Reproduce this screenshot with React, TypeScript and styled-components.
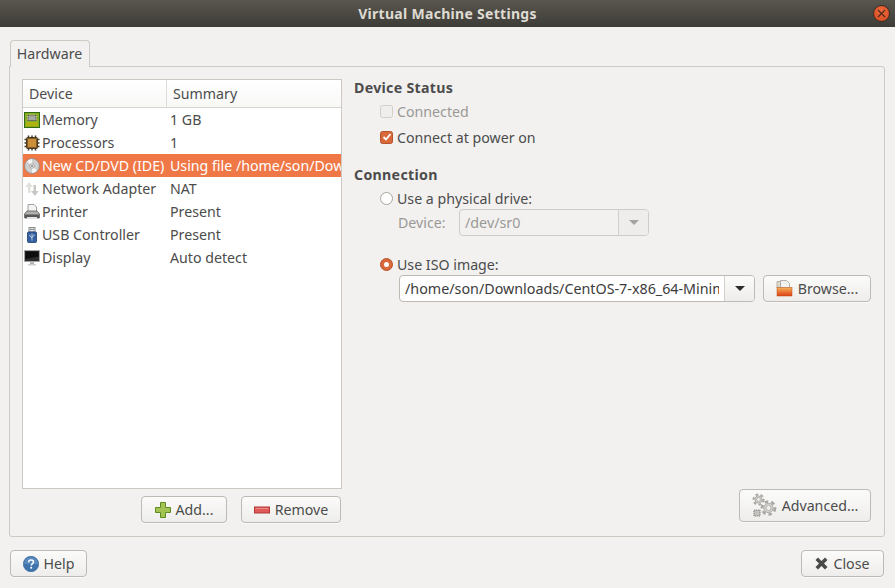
import React from 'react';
import styled, { createGlobalStyle } from 'styled-components';

const GlobalStyle = createGlobalStyle`
  html, body { margin: 0; padding: 0; }
  body {
    width: 895px;
    height: 588px;
    overflow: hidden;
    background: #f2f1f0;
    font-family: "Noto Sans", "Open Sans", sans-serif;
    font-size: 14.2px;
    color: #4c4c4c;
  }
`;

const Window = styled.div`
  width: 895px;
  height: 588px;
  display: flex;
  flex-direction: column;
`;

const TitleBar = styled.div`
  height: 27px;
  flex: none;
  display: grid;
  grid-template-columns: 1fr auto 1fr;
  align-items: center;
  background: linear-gradient(#59564e, #3d3c37);
  color: #dfdbd2;
  font-weight: 700;
  font-size: 14px;
  letter-spacing: 0.3px;
`;

const Title = styled.div`
  grid-column: 2;
`;

const WindowClose = styled.div`
  grid-column: 3;
  justify-self: end;
  margin-right: 5px;
  width: 15px;
  height: 15px;
  border-radius: 50%;
  background: radial-gradient(circle at 50% 35%, #f0693c, #d4481f);
  border: 0.5px solid #3a2c22;
  display: flex;
  align-items: center;
  justify-content: center;
`;

const Content = styled.div`
  flex: 1;
  display: flex;
  flex-direction: column;
  padding: 13px 10px 11px 9px;
  min-height: 0;
`;

const TabStrip = styled.div`
  display: flex;
  height: 26px;
  flex: none;
`;

const Tab = styled.div`
  margin-left: 0.5px;
  width: 80px;
  box-sizing: border-box;
  border: 1px solid #cdc9c3;
  border-bottom: 0;
  border-radius: 4px 4px 0 0;
  background: #f2f1f0;
  text-align: center;
  line-height: 25px;
  margin-bottom: -1px;
  position: relative;
  z-index: 1;
`;

const Notebook = styled.div`
  flex: 1;
  min-height: 0;
  box-sizing: border-box;
  border: 1px solid #cdc9c3;
  border-radius: 0 3px 3px 3px;
  display: flex;
  gap: 12px;
  padding: 12px 13px 13px 12px;
`;

const LeftColumn = styled.div`
  width: 320px;
  flex: none;
  display: flex;
  flex-direction: column;
`;

const DeviceTable = styled.div`
  flex: 1;
  box-sizing: border-box;
  background: #fff;
  border: 1px solid #cdc9c3;
  overflow: hidden;
`;

const HeaderRow = styled.div`
  height: 28px;
  box-sizing: border-box;
  display: grid;
  grid-template-columns: 143px 1fr;
  border-bottom: 1px solid #d8d5d1;
  background: linear-gradient(#fff, #f8f8f7);
`;

const HeaderCell = styled.div<{ $divider?: boolean }>`
  padding-left: 6px;
  line-height: 27px;
  border-left: ${(p) => (p.$divider ? '1px solid #dedbd8' : '0')};
`;

const Row = styled.div<{ $selected?: boolean }>`
  height: 23px;
  display: grid;
  grid-template-columns: 147px 1fr;
  align-items: center;
  white-space: nowrap;
  overflow: hidden;
  background: ${(p) => (p.$selected ? '#f07746' : 'transparent')};
  color: ${(p) => (p.$selected ? '#fff' : '#4c4c4c')};
`;

const NameCell = styled.div`
  display: flex;
  align-items: center;
  gap: 2px;
  padding-left: 1px;
`;

const SummaryCell = styled.div`
  min-width: 0;
  overflow: hidden;
`;

const ButtonRow = styled.div`
  display: flex;
  justify-content: flex-end;
  gap: 14px;
  padding-right: 1px;
  margin-top: 7px;
`;

const Button = styled.div<{ $w: number; $h?: number }>`
  width: ${(p) => p.$w}px;
  height: ${(p) => p.$h ?? 27}px;
  flex: none;
  box-sizing: border-box;
  border: 1px solid #bdb9b3;
  border-radius: 4px;
  background: linear-gradient(#fbfbfa, #eeedeb);
  box-shadow: 0 1px 0 rgba(255, 255, 255, 0.6);
  display: flex;
  align-items: center;
  justify-content: center;
  gap: 5px;
`;

const RightColumn = styled.div`
  flex: 1;
  min-width: 0;
  display: flex;
  flex-direction: column;
`;

const Heading = styled.div<{ $top: number }>`
  font-weight: 700;
  line-height: 18px;
  letter-spacing: 0.3px;
  margin-top: ${(p) => p.$top}px;
  color: #4c4c4c;
`;

const OptionRow = styled.div<{ $top: number; $disabled?: boolean }>`
  display: flex;
  align-items: center;
  gap: 4px;
  height: 18px;
  margin-top: ${(p) => p.$top}px;
  padding-left: 26px;
  color: ${(p) => (p.$disabled ? '#9a9995' : '#4c4c4c')};
`;

const CheckBox = styled.div<{ $checked?: boolean; $disabled?: boolean }>`
  width: 13px;
  height: 13px;
  box-sizing: border-box;
  border-radius: 2.5px;
  border: 1px solid ${(p) => (p.$checked ? '#b5542c' : p.$disabled ? '#d2cfca' : '#aaa')};
  background: ${(p) => (p.$checked ? '#d9683b' : p.$disabled ? '#efeeec' : '#fff')};
  display: flex;
  align-items: center;
  justify-content: center;
`;

const Radio = styled.div<{ $checked?: boolean }>`
  width: 13px;
  height: 13px;
  box-sizing: border-box;
  border-radius: 50%;
  border: 1px solid ${(p) => (p.$checked ? '#b5542c' : '#a8a5a0')};
  background: ${(p) => (p.$checked ? '#d9683b' : '#fff')};
  display: flex;
  align-items: center;
  justify-content: center;
  &::after {
    content: '';
    display: ${(p) => (p.$checked ? 'block' : 'none')};
    width: 5px;
    height: 5px;
    border-radius: 50%;
    background: #fff;
  }
`;

const DeviceLine = styled.div`
  display: flex;
  align-items: center;
  margin-top: 2px;
  padding-left: 44px;
  color: #9a9995;
`;

const DeviceLabel = styled.div`
  width: 61px;
`;

const ComboBox = styled.div<{ $w: number; $disabled?: boolean }>`
  width: ${(p) => p.$w}px;
  height: 27px;
  flex: none;
  box-sizing: border-box;
  display: flex;
  border: 1px solid ${(p) => (p.$disabled ? '#cfccc7' : '#bdb9b3')};
  border-radius: 4px;
  overflow: hidden;
  background: ${(p) => (p.$disabled ? '#f2f1f0' : '#fff')};
`;

const ComboText = styled.div<{ $disabled?: boolean }>`
  flex: 1;
  min-width: 0;
  margin: 0 5px;
  font-size: 14.3px;
  white-space: nowrap;
  overflow: hidden;
  line-height: 25px;
  color: ${(p) => (p.$disabled ? '#9a9995' : '#3c3c3c')};
`;

const ComboArrow = styled.div<{ $disabled?: boolean }>`
  width: 29px;
  flex: none;
  display: flex;
  align-items: center;
  justify-content: center;
  border-left: 1px solid #d3d0cb;
  background: ${(p) => (p.$disabled ? '#eeedeb' : 'linear-gradient(#fbfbfa, #eeedeb)')};
  &::after {
    content: '';
    border-left: 5px solid transparent;
    border-right: 5px solid transparent;
    border-top: 5px solid ${(p) => (p.$disabled ? '#a5a3a0' : '#2c2c2c')};
  }
`;

const IsoLine = styled.div`
  display: flex;
  align-items: center;
  gap: 8px;
  margin-top: 2px;
  padding-left: 45px;
`;

const Spacer = styled.div`
  flex: 1;
`;

const AdvancedRow = styled.div`
  display: flex;
  justify-content: flex-end;
  margin-bottom: 1px;
`;

const Footer = styled.div`
  display: flex;
  justify-content: space-between;
  flex: none;
  margin-top: 13px;
  padding: 0 1px;
`;

const Icon = styled.svg`
  flex: none;
  display: block;
`;

const MemoryIcon = () => (
  <Icon width="16" height="16" viewBox="0 0 16 16">
    <rect x="0.5" y="0.5" width="15" height="15" fill="#8aac26" stroke="#2f6b12" />
    <path d="M2 10h12v4.500H2z" fill="#d9d90f" />
    <path d="M3 10v5M5 10v5M7 10v5M9 10v5M11 10v5M13 10v5" stroke="#6a7a10" strokeWidth="0.8" />
    <rect x="4" y="3.500" width="8" height="5" fill="#a9a9a4" stroke="#555" strokeWidth="0.7" />
    <path d="M3 4.500h1M3 7h1M12 4.500h1M12 7h1M6 2.500v1M8 2.500v1M10 2.500v1" stroke="#e4e4e0" strokeWidth="0.8" />
  </Icon>
);

const CpuIcon = () => (
  <Icon width="16" height="16" viewBox="0 0 16 16">
    <path d="M4.500 0.500v15M8 0.500v15M11.500 0.500v15M0.500 4.500h15M0.500 8h15M0.500 11.500h15" stroke="#3f3a32" strokeWidth="1.500" />
    <rect x="2.500" y="2.500" width="11" height="11" rx="1" fill="#7a5a2a" stroke="#4d3a1d" />
    <rect x="4" y="4" width="8" height="8" fill="#cc8e36" />
  </Icon>
);

const DiscIcon = () => (
  <Icon width="16" height="16" viewBox="0 0 16 16">
    <circle cx="8" cy="8" r="7.400" fill="#cfcfcf" stroke="#8d8d8d" strokeWidth="0.8" />
    <path d="M8 8L3 3.500A7 7 0 0 1 8 1zM8 8l5 4.500A7 7 0 0 1 8 15z" fill="#f4f4f4" />
    <circle cx="8" cy="8" r="2.200" fill="#fff" stroke="#8d8d8d" strokeWidth="0.8" />
    <circle cx="8" cy="8" r="0.900" fill="#777" />
  </Icon>
);

const NetworkIcon = () => (
  <Icon width="16" height="16" viewBox="0 0 16 16">
    <path d="M5 1L1.500 6H4v6h2.500V6H9z" fill="#e0dfdb" />
    <path d="M11 15l3.500-5H12V4H9.500v6H7z" fill="#c8c7c3" />
  </Icon>
);

const PrinterIcon = () => (
  <Icon width="16" height="16" viewBox="0 0 16 16">
    <path d="M4 0.500h6l2.500 2.500v5H4z" fill="#f4f4f2" stroke="#8a8a86" strokeWidth="0.8" />
    <path d="M3 7h10l2.500 3v4H0.500v-4z" fill="#b0b0ad" stroke="#5e5e5b" strokeWidth="0.8" />
    <rect x="1" y="10.500" width="14" height="3.500" fill="#55555a" />
    <rect x="3" y="13" width="10" height="2" fill="#e2e2e2" />
  </Icon>
);

const UsbIcon = () => (
  <Icon width="16" height="16" viewBox="0 0 16 16">
    <rect x="5" y="0.500" width="6" height="4.500" fill="#e4e4e2" stroke="#77777a" strokeWidth="0.8" />
    <rect x="6.300" y="1.800" width="1.200" height="1.200" fill="#555" />
    <rect x="8.600" y="1.800" width="1.200" height="1.200" fill="#555" />
    <rect x="3.500" y="5" width="9" height="10.500" rx="1" fill="#34609f" stroke="#1f3c6c" strokeWidth="0.8" />
    <path d="M8 6.500v7M8 11L5.800 9V7.800M8 10l2.200-1.600V7.500" stroke="#dbe5f2" strokeWidth="0.8" fill="none" />
  </Icon>
);

const DisplayIcon = () => (
  <Icon width="16" height="16" viewBox="0 0 16 16">
    <rect x="0.500" y="0.500" width="15" height="11" fill="#2d2d2d" stroke="#a8a8a8" strokeWidth="0.800" />
    <path d="M1.500 1.500h13v5L1.500 9z" fill="#0e0e0e" />
    <rect x="6" y="11.500" width="4" height="2.500" fill="#b5b5b5" />
    <rect x="4" y="14" width="8" height="1.500" fill="#cfcfcf" />
  </Icon>
);

const PlusIcon = () => (
  <Icon width="16" height="16" viewBox="0 0 16 16">
    <path d="M5.500 0.500h5v5h5v5h-5v5h-5v-5h-5v-5h5z" fill="#a3c453" stroke="#5f8a22" />
  </Icon>
);

const MinusIcon = () => (
  <Icon width="16" height="16" viewBox="0 0 16 16">
    <rect x="0.500" y="5" width="15" height="6" fill="#e05a5a" stroke="#b13737" />
    <rect x="1.500" y="6" width="13" height="1" fill="#ec8b8b" />
  </Icon>
);

const HelpIcon = () => (
  <Icon width="16" height="16" viewBox="0 0 16 16">
    <circle cx="8" cy="8" r="7.700" fill="#3f74ac" stroke="#2e5c90" strokeWidth="0.600" />
    <path d="M1 8a7 7 0 0 1 14 0z" fill="#6b9bc9" opacity="0.6" />
    <path d="M5.600 6.200C5.700 4.700 6.800 4 8 4c1.400 0 2.500.8 2.500 2 0 1.800-2.300 1.800-2.300 3.500" fill="none" stroke="#fff" strokeWidth="1.500" />
    <rect x="7.300" y="10.800" width="1.800" height="1.800" fill="#fff" />
  </Icon>
);

const CloseIcon = () => (
  <Icon width="13" height="13" viewBox="0 0 13 13">
    <path d="M3 0.500l3.500 3.500 3.500-3.500 2.500 2.500L9 6.500l3.500 3.500-2.500 2.500L6.500 9 3 12.500 0.500 10 4 6.500 0.500 3z" fill="#4a4a48" />
  </Icon>
);

const FolderIcon = () => (
  <Icon width="17" height="17" viewBox="0 0 17 17">
    <defs>
      <linearGradient id="folderFill" x1="0" y1="0" x2="0" y2="1">
        <stop offset="0" stopColor="#f6b15a" />
        <stop offset="1" stopColor="#dc3f14" />
      </linearGradient>
    </defs>
    <path d="M1 1.500h3.500V8H1z" fill="#dcd7cb" stroke="#a49d8f" strokeWidth="0.700" />
    <path d="M4.500 0.500h6l3 3V8h-9z" fill="#f3f2ee" stroke="#a0a0a0" strokeWidth="0.800" />
    <rect x="1" y="7.500" width="15" height="8.500" fill="url(#folderFill)" stroke="#b8501f" strokeWidth="0.500" />
  </Icon>
);

const Gear = ({ cx, cy, r }: { cx: number; cy: number; r: number }) => (
  <g>
    <circle cx={cx} cy={cy} r={r} fill="none" stroke="#a9a8a4" strokeWidth={r * 0.42} strokeDasharray={`${r * 0.55} ${r * 0.45}`} />
    <circle cx={cx} cy={cy} r={r * 0.72} fill="#d2d1cd" stroke="#9b9a96" strokeWidth="0.700" />
    <circle cx={cx} cy={cy} r={r * 0.38} fill="#f2f1ef" stroke="#9b9a96" strokeWidth="0.600" />
  </g>
);

const GearsIcon = () => (
  <Icon width="25" height="25" viewBox="0 0 25 25">
    <Gear cx={6.500} cy={6.500} r={5} />
    <Gear cx={16.500} cy={15} r={6.500} />
    <rect x="2" y="17" width="6" height="6" fill="#c2c1bd" stroke="#8a8a86" strokeWidth="1.200" strokeDasharray="1.300 0.700" />
  </Icon>
);

const devices = [
  { name: 'Memory', summary: '1 GB', icon: <MemoryIcon /> },
  { name: 'Processors', summary: '1', icon: <CpuIcon /> },
  { name: 'New CD/DVD (IDE)', summary: 'Using file /home/son/Dow', icon: <DiscIcon />, selected: true },
  { name: 'Network Adapter', summary: 'NAT', icon: <NetworkIcon /> },
  { name: 'Printer', summary: 'Present', icon: <PrinterIcon /> },
  { name: 'USB Controller', summary: 'Present', icon: <UsbIcon /> },
  { name: 'Display', summary: 'Auto detect', icon: <DisplayIcon /> },
];

const App = () => (
  <Window>
    <GlobalStyle />
    <TitleBar>
      <Title>Virtual Machine Settings</Title>
      <WindowClose>
        <svg width="9" height="9" viewBox="0 0 9 9">
          <path d="M1 1l7 7M8 1L1 8" stroke="#4a2a1a" strokeWidth="1.200" />
        </svg>
      </WindowClose>
    </TitleBar>
    <Content>
      <TabStrip>
        <Tab>Hardware</Tab>
      </TabStrip>
      <Notebook>
        <LeftColumn>
          <DeviceTable>
            <HeaderRow>
              <HeaderCell>Device</HeaderCell>
              <HeaderCell $divider>Summary</HeaderCell>
            </HeaderRow>
            {devices.map((d) => (
              <Row key={d.name} $selected={d.selected}>
                <NameCell>
                  {d.icon}
                  {d.name}
                </NameCell>
                <SummaryCell>{d.summary}</SummaryCell>
              </Row>
            ))}
          </DeviceTable>
          <ButtonRow>
            <Button $w={86}>
              <PlusIcon />
              Add...
            </Button>
            <Button $w={100}>
              <MinusIcon />
              Remove
            </Button>
          </ButtonRow>
        </LeftColumn>
        <RightColumn>
          <Heading $top={0}>Device Status</Heading>
          <OptionRow $top={5} $disabled>
            <CheckBox $disabled />
            Connected
          </OptionRow>
          <OptionRow $top={8}>
            <CheckBox $checked>
              <svg width="10" height="10" viewBox="0 0 10 10">
                <path d="M1.500 5l2.500 2.500L8.500 2" fill="none" stroke="#fff" strokeWidth="1.800" />
              </svg>
            </CheckBox>
            Connect at power on
          </OptionRow>
          <Heading $top={20}>Connection</Heading>
          <OptionRow $top={5}>
            <Radio />
            Use a physical drive:
          </OptionRow>
          <DeviceLine>
            <DeviceLabel>Device:</DeviceLabel>
            <ComboBox $w={190} $disabled>
              <ComboText $disabled>/dev/sr0</ComboText>
              <ComboArrow $disabled />
            </ComboBox>
          </DeviceLine>
          <OptionRow $top={19}>
            <Radio $checked />
            Use ISO image:
          </OptionRow>
          <IsoLine>
            <ComboBox $w={356}>
              <ComboText>/home/son/Downloads/CentOS-7-x86_64-Minim</ComboText>
              <ComboArrow />
            </ComboBox>
            <Button $w={108}>
              <FolderIcon />
              Browse...
            </Button>
          </IsoLine>
          <Spacer />
          <AdvancedRow>
            <Button $w={132} $h={33}>
              <GearsIcon />
              Advanced...
            </Button>
          </AdvancedRow>
        </RightColumn>
      </Notebook>
      <Footer>
        <Button $w={77}>
          <HelpIcon />
          Help
        </Button>
        <Button $w={83}>
          <CloseIcon />
          Close
        </Button>
      </Footer>
    </Content>
  </Window>
);

export default App;
